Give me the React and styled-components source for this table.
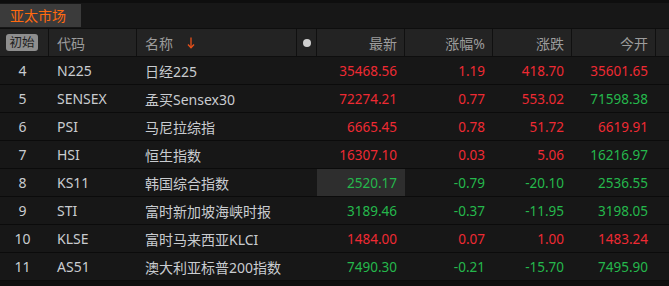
import React from "react";
import styled, { createGlobalStyle } from "styled-components";

const GlobalStyle = createGlobalStyle`
  html, body {
    margin: 0;
    padding: 0;
    background: #0e0e0e;
  }
  body {
    font-family: "Noto Sans", "Noto Sans CJK SC", sans-serif;
    font-size: 13px;
  }
`;

const COLS = "49px 88px 160px 20px 88px 88px 79px 84px 1fr";

const Panel = styled.div`
  width: 669px;
  height: 286px;
  background: #0e0e0e;
  padding-top: 3px;
  box-sizing: border-box;
  overflow: hidden;
`;

const TabBar = styled.div`
  display: flex;
  height: 25px;
  background: #171717;
  padding-top: 1px;
  box-sizing: border-box;
`;

const Tab = styled.div`
  width: 81px;
  height: 23px;
  background: #3b3b3b;
  color: #ff6a10;
  font-size: 14px;
  line-height: 23px;
  padding-left: 10px;
  box-sizing: border-box;
`;

const HeaderRow = styled.div`
  display: grid;
  grid-template-columns: ${COLS};
  height: 27px;
  background: #232323;
  border-top: 1px solid #0e0e0e;
  border-bottom: 1px solid #0e0e0e;
`;

const HeadCell = styled.div`
  display: flex;
  align-items: center;
  justify-content: ${(p) => (p.right ? "flex-end" : p.center ? "center" : "flex-start")};
  padding: ${(p) => (p.right ? "0 7px 0 0" : p.center ? "0" : "0 0 0 8px")};
  border-right: ${(p) => (p.last ? "none" : "1px solid #101010")};
  color: #9c9c9c;
  font-size: 14px;
  gap: 14px;
`;

const Badge = styled.span`
  background: #8e8e8e;
  color: #1e1e1e;
  border-radius: 3px;
  padding: 0 3px;
  height: 17px;
  line-height: 17px;
  font-size: 12.5px;
  margin-right: 4px;
`;

const Dot = styled.span`
  width: 8px;
  height: 8px;
  border-radius: 50%;
  background: #cfcfcf;
`;

const Row = styled.div`
  display: grid;
  grid-template-columns: ${COLS};
  height: 27px;
  background: #171717;
  border-bottom: 1px solid #0b0b0b;
`;

const Cell = styled.div`
  display: flex;
  align-items: center;
  justify-content: ${(p) => (p.right ? "flex-end" : p.center ? "center" : "flex-start")};
  padding: ${(p) => (p.right ? "0 8px 0 0" : p.center ? "0 4px 0 0" : "0 0 0 8px")};
  color: ${(p) => (p.up ? "#ee2a33" : p.down ? "#25b84c" : "#c9ccd0")};
  background: ${(p) => (p.active ? "#2e2e2e" : "transparent")};
  font-size: ${(p) => (p.right ? "13.5px" : "14px")};
  white-space: nowrap;
`;

const rows = [
  ["4", "N225", "日经225", "35468.56", "1.19", "418.70", "35601.65", 1, 1],
  ["5", "SENSEX", "孟买Sensex30", "72274.21", "0.77", "553.02", "71598.38", 1, 0],
  ["6", "PSI", "马尼拉综指", "6665.45", "0.78", "51.72", "6619.91", 1, 1],
  ["7", "HSI", "恒生指数", "16307.10", "0.03", "5.06", "16216.97", 1, 0],
  ["8", "KS11", "韩国综合指数", "2520.17", "-0.79", "-20.10", "2536.55", 0, 0],
  ["9", "STI", "富时新加坡海峡时报", "3189.46", "-0.37", "-11.95", "3198.05", 0, 0],
  ["10", "KLSE", "富时马来西亚KLCI", "1484.00", "0.07", "1.00", "1483.24", 1, 1],
  ["11", "AS51", "澳大利亚标普200指数", "7490.30", "-0.21", "-15.70", "7495.90", 0, 0],
];

const SortArrow = () => (
  <svg width="8" height="12" viewBox="0 0 8 12">
    <path d="M4 0.5 V10.5" stroke="#e8501a" strokeWidth="1.3" fill="none" />
    <path d="M1 7.5 L4 10.8 L7 7.5" stroke="#e8501a" strokeWidth="1.3" fill="none" />
  </svg>
);

export default function App() {
  return (
    <Panel>
      <GlobalStyle />
      <TabBar>
        <Tab>亚太市场</Tab>
      </TabBar>
      <HeaderRow>
        <HeadCell center>
          <Badge>初始</Badge>
        </HeadCell>
        <HeadCell>代码</HeadCell>
        <HeadCell>
          名称 <SortArrow />
        </HeadCell>
        <HeadCell center>
          <Dot />
        </HeadCell>
        <HeadCell right>最新</HeadCell>
        <HeadCell right>涨幅%</HeadCell>
        <HeadCell right>涨跌</HeadCell>
        <HeadCell right>今开</HeadCell>
        <HeadCell last />
      </HeaderRow>
      {rows.map(([idx, code, name, last, pct, chg, open, up, openUp]) => (
        <Row key={code}>
          <Cell center>{idx}</Cell>
          <Cell>{code}</Cell>
          <Cell>{name}</Cell>
          <Cell />
          <Cell right up={up} down={!up} active={code === "KS11"}>
            {last}
          </Cell>
          <Cell right up={up} down={!up}>
            {pct}
          </Cell>
          <Cell right up={up} down={!up}>
            {chg}
          </Cell>
          <Cell right up={openUp} down={!openUp}>
            {open}
          </Cell>
          <Cell />
        </Row>
      ))}
    </Panel>
  );
}
